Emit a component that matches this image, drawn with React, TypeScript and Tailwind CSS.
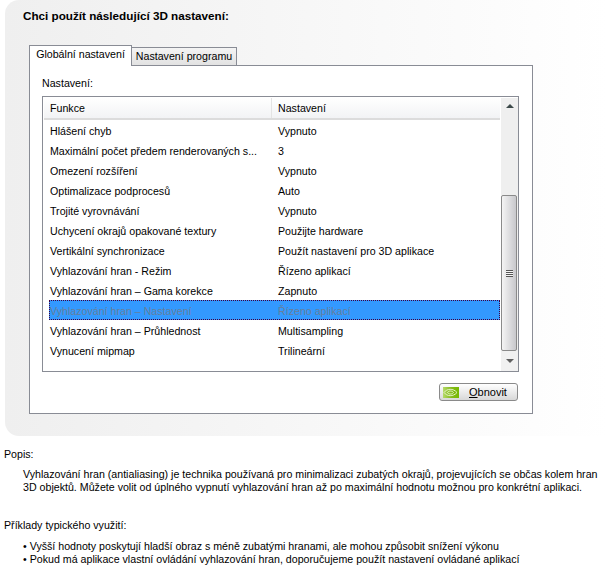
const rows = [
  ["Hlášení chyb", "Vypnuto"],
  ["Maximální počet předem renderovaných s...", "3"],
  ["Omezení rozšíření", "Vypnuto"],
  ["Optimalizace podprocesů", "Auto"],
  ["Trojité vyrovnávání", "Vypnuto"],
  ["Uchycení okrajů opakované textury", "Použijte hardware"],
  ["Vertikální synchronizace", "Použít nastavení pro 3D aplikace"],
  ["Vyhlazování hran - Režim", "Řízeno aplikací"],
  ["Vyhlazování hran – Gama korekce", "Zapnuto"],
  ["Vyhlazování hran – Nastavení", "Řízeno aplikací"],
  ["Vyhlazování hran – Průhlednost", "Multisampling"],
  ["Vynucení mipmap", "Trilineární"],
];

function NvidiaLogo() {
  return (
    <svg width="16" height="11" viewBox="0 0 16 11" className="shrink-0">
      <defs>
        <linearGradient id="nv" x1="0" x2="1" y1="0" y2="0">
          <stop offset="0" stopColor="#b5d96a" />
          <stop offset="0.5" stopColor="#86bc1e" />
          <stop offset="1" stopColor="#76b900" />
        </linearGradient>
      </defs>
      <rect width="16" height="11" fill="url(#nv)" />
      <path d="M1 5.5 C4 1.5 10 1 14 5.5 C10 10 4 9.5 1 5.5 Z" fill="none" stroke="#e4f2c4" strokeWidth="1" />
      <path d="M4.5 5.5 C6 3.5 9 3.5 10.5 5.5 C9 7.5 6 7.5 4.5 5.5 Z" fill="none" stroke="#e4f2c4" strokeWidth="1" />
    </svg>
  );
}

export default function App() {
  return (
    <div className="w-[609px] h-[588px] overflow-hidden bg-white text-[10.65px] leading-[13px] text-black font-['Liberation_Sans',sans-serif]">
      <div className="ml-[5px] h-[436px] rounded-bl-[14px] rounded-tl-[14px] bg-gradient-to-r from-[#efefef] to-white pt-[9px] pl-[18px]">
        <h2 className="h-[14px] font-bold text-[11.7px]">Chci použít následující 3D nastavení:</h2>

        <div className="mt-[21px] ml-[6px] flex items-end h-[21px]">
          <div className="relative z-10 -mb-px flex h-[21px] w-[103px] items-center justify-center border border-b-0 border-[#898c95] bg-white pb-[3px] whitespace-nowrap">
            Globální nastavení
          </div>
          <div className="flex h-[18px] w-[105px] items-center justify-center border border-l-0 border-b-0 border-[#898c95] bg-gradient-to-b from-[#f4f4f4] to-[#e2e2e2] whitespace-nowrap">
            Nastavení programu
          </div>
        </div>

        <div className="ml-[6px] h-[349px] w-[504px] border border-[#898c95] bg-white pl-[12px] pt-[11px]">
          <div className="h-[19px]">Nastavení:</div>

          <div className="flex h-[276px] w-[477px] border border-[#898c95] pl-px pt-px">
            <div className="w-[457px]">
              <div className="flex h-[22px] border-b-2 border-[#dcdcdc] bg-gradient-to-b from-white to-[#f2f3f5]">
                <div className="flex w-[228px] items-center border-r border-[#e4e4e4] pl-[6px]">Funkce</div>
                <div className="flex items-center pl-[6px]">Nastavení</div>
              </div>
              <div className="ml-[5px]">
                {rows.map((row, i) => (
                  <div
                    key={row[0]}
                    className={
                      i === 9
                        ? "flex h-[20px] items-center border border-dotted border-[#400040] bg-[#3399ff] pt-[2px] text-[#667f9c]"
                        : "flex h-[20px] items-center border border-transparent pt-[2px]"
                    }
                  >
                    <div className="w-[228px] whitespace-nowrap">{row[0]}</div>
                    <div className="whitespace-nowrap">{row[1]}</div>
                  </div>
                ))}
              </div>
            </div>

            <div className="ml-px flex w-[17px] flex-col bg-[#efefef]">
              <div className="flex h-[17px] items-center justify-center">
                <svg width="8" height="5" viewBox="0 0 8 5"><path d="M4 0 L8 4 L0 4 Z" fill="#3d4a4a" /></svg>
              </div>
              <div className="h-[80px]" />
              <div className="flex h-[156px] w-[16px] items-center justify-center rounded-[2px] border border-[#8a8a8a] bg-gradient-to-r from-[#f4f4f4] to-[#c8c8cc]">
                <div className="h-[7px] w-[7px] border-y border-[#555] bg-[linear-gradient(#f4f4f4_0_1px,#555_1px_2px,#f4f4f4_2px_3px,#555_3px_4px,#f4f4f4_4px)]" />
              </div>
              <div className="flex flex-1 items-center justify-center bg-[#f1f1f1]">
                <svg width="8" height="5" viewBox="0 0 8 5"><path d="M0 0 H8 L4 4 Z" fill="#606060" /></svg>
              </div>
            </div>
          </div>

          <div className="mt-[11px] flex w-[476px] justify-end">
            <button className="flex h-[18px] w-[79px] items-center gap-[10px] rounded-[3px] border border-[#8a8a8a] bg-gradient-to-b from-white to-[#d8d8d8] pl-[3px] text-[11px]">
              <NvidiaLogo />
              <span><span className="underline">O</span>bnovit</span>
            </button>
          </div>
        </div>
      </div>

      <div className="pl-[4px] pt-[12px]">
        <div>Popis:</div>
        <p className="mt-[7px] pl-[19px] whitespace-nowrap">
          Vyhlazování hran (antialiasing) je technika používaná pro minimalizaci zubatých okrajů, projevujících se občas kolem hran
          <br />
          3D objektů. Můžete volit od úplného vypnutí vyhlazování hran až po maximální hodnotu možnou pro konkrétní aplikaci.
        </p>
        <div className="mt-[25px]">Příklady typického využití:</div>
        <ul className="mt-[8px] pl-[19px] whitespace-nowrap">
          <li>• Vyšší hodnoty poskytují hladší obraz s méně zubatými hranami, ale mohou způsobit snížení výkonu</li>
          <li>• Pokud má aplikace vlastní ovládání vyhlazování hran, doporučujeme použít nastavení ovládané aplikací</li>
        </ul>
      </div>
    </div>
  );
}
